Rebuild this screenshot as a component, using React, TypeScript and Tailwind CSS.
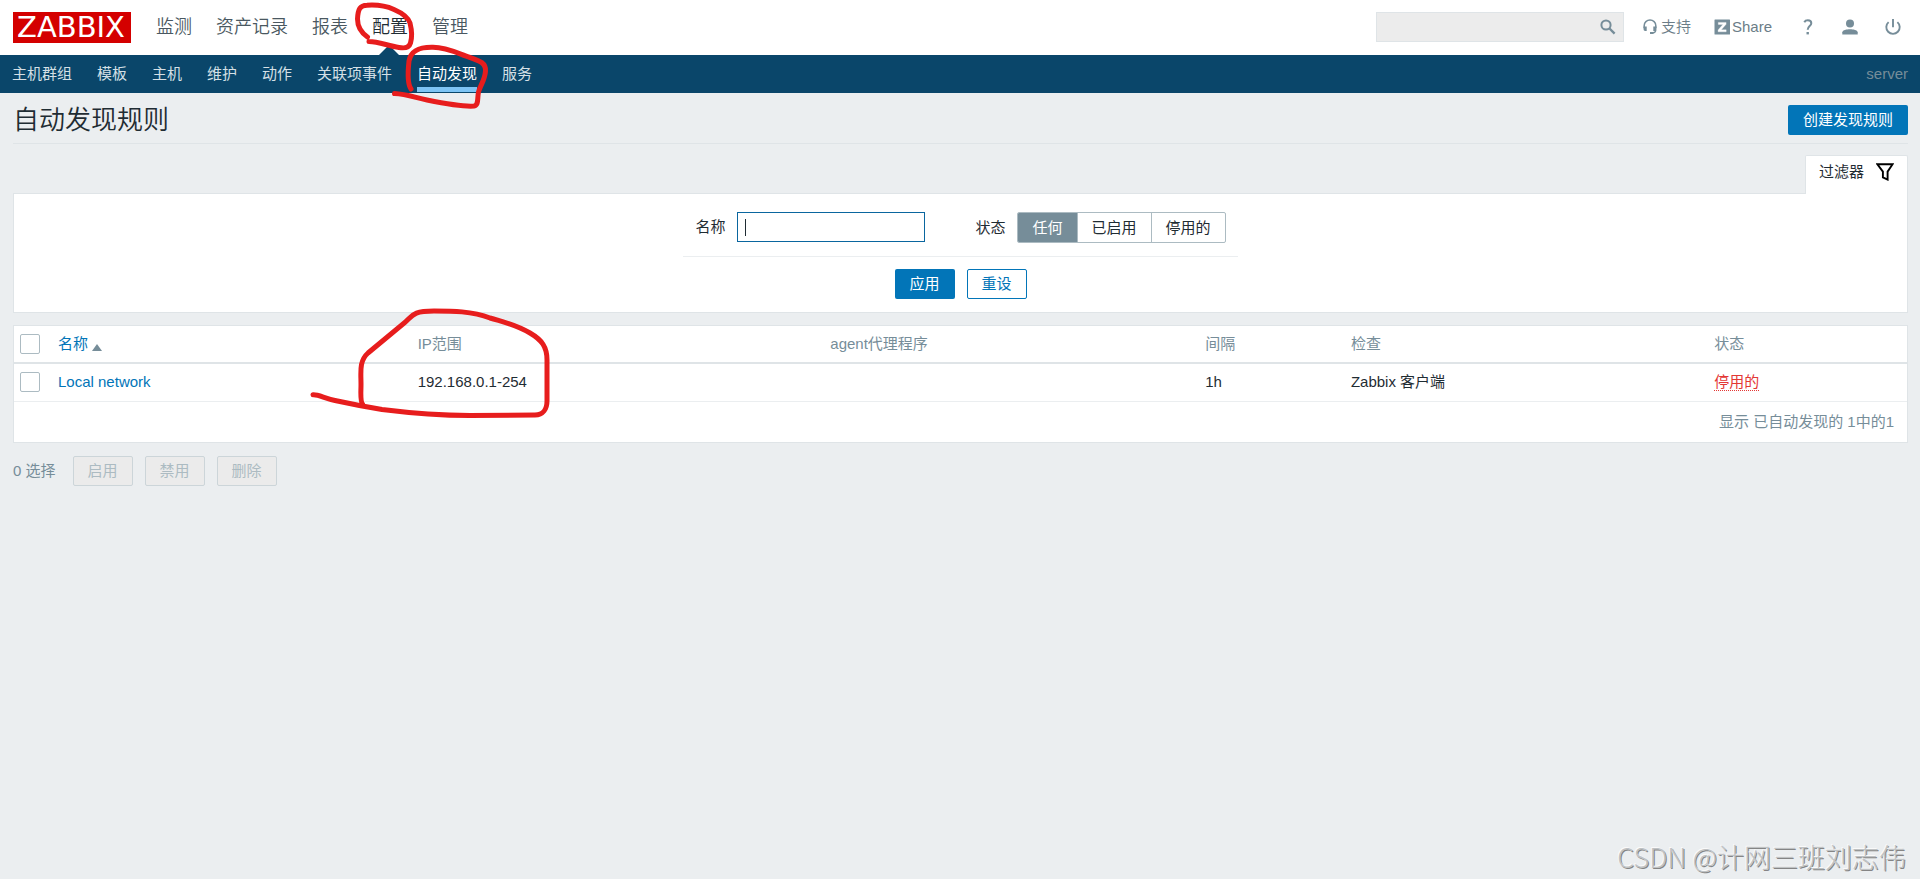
import { useState } from "react";

const mainMenu = ["监测", "资产记录", "报表", "配置", "管理"];
const subMenu = ["主机群组", "模板", "主机", "维护", "动作", "关联项事件", "自动发现", "服务"];
const statuses = ["任何", "已启用", "停用的"];
const bulkActions = ["启用", "禁用", "删除"];

function SearchIcon() {
  return (
    <svg viewBox="0 0 16 16" className="size-4" fill="none" stroke="#768d99">
      <circle cx="6" cy="6" r="4.6" strokeWidth="2" />
      <path d="M9.5 9.5 14.6 14.6" strokeWidth="2.4" />
    </svg>
  );
}

function HeadsetIcon() {
  return (
    <svg viewBox="0 0 14 16" className="h-4 w-[14px]" fill="none" stroke="#768d99">
      <path d="M1.2 9V6.6a5.8 5.6 0 0 1 11.6 0V9" strokeWidth="1.5" />
      <path d="M0.5 7.5h3.2v4.6H2.2Q.5 12.1.5 10zM13.5 7.5h-3.2v4.6h1.5q1.7 0 1.7-2.1z" fill="#768d99" stroke="none" />
      <path d="M12.8 10.8c0 2.4-1.2 3.1-3 3.2" strokeWidth="1.3" />
      <path d="M7 13h3.4v2H7z" fill="#768d99" stroke="none" />
    </svg>
  );
}

function ShareIcon() {
  return (
    <svg viewBox="0 0 16 16" className="size-4">
      <rect x=".5" y=".5" width="15.5" height="15" rx=".5" fill="#768d99" />
      <path d="M4.3 3.4h7.8v1.9l-4.8 5.5h4.9v2H4.1v-1.9l4.8-5.5H4.300z" fill="#fff" stroke="#fff" strokeWidth=".3" />
    </svg>
  );
}

function HelpIcon() {
  return (
    <svg viewBox="0 0 10 16" className="h-4 w-[10px]" fill="none" stroke="#768d99">
      <path d="M1.3 3.2C2 1.9 3.3 1.3 4.8 1.3c2 0 3.5 1 3.5 2.9 0 2.9-3.6 3-3.6 6.6" strokeWidth="2" />
      <rect x="3.5" y="13" width="2.4" height="2.4" fill="#768d99" stroke="none" />
    </svg>
  );
}

function UserIcon() {
  return (
    <svg viewBox="0 0 16 16" className="size-4" fill="#768d99">
      <circle cx="8" cy="4.4" r="4" />
      <path d="M.3 15.4v-2.2C.8 11 4.5 10.3 8 10.3s7.2.7 7.7 2.9v2.2z" />
    </svg>
  );
}

function PowerIcon() {
  return (
    <svg viewBox="0 0 16 16" className="size-4" fill="none" stroke="#768d99" strokeWidth="1.9">
      <path d="M8 0v8.3M3.6 3.1a6.7 6.7 0 1 0 8.8 0" />
    </svg>
  );
}

function FunnelIcon() {
  return (
    <svg viewBox="0 0 18 18" className="size-[18px]" fill="none" stroke="#000" strokeWidth="1.9">
      <path d="M1.4 1.2h15.2l-5 7.4v8L6.900 14.4V8.6z" />
    </svg>
  );
}

function Annotations() {
  return (
    <svg
      viewBox="0 0 600 440"
      className="pointer-events-none absolute top-0 left-0 h-[440px] w-[600px]"
      fill="none"
      stroke="#e71d1d"
      strokeWidth="5"
      strokeLinecap="round"
      strokeLinejoin="round"
      aria-hidden="true"
    >
      <path d="M367.5 37C359 31 357.5 24 357.5 19C358 9 360 5.5 367 5.3C378 4.5 386 6 394 9.5C402 13 408 17 410 23C411.5 29 412 38 410.5 43C409 48 405 48.5 399 47.5C388 46 379 41.5 369 41.5" />
      <path d="M411 89C407.5 84 408 70 409 61C411 50 420 47 433 47.3C448 47.5 459 54 470 57.5C480 61 486 63 485.5 71C485 80 480 86 478.5 92C477 99 479 105 474 106C463 107 442 103 427 100C415 97.5 406 94 394.5 93.5" />
      <path d="M313 394.8C318 394.3 324 398 335 400.5C351 404 367 407 382 409.5C418 414 440 415.5 470 415.5L535 415C543 415 547 409 547 401L547 360C547 347 542 340 530 333C515 324 503 322 490 318C472 311 452 311 434 311C411 311 413 316 403 324L368 353C359 361 361 372 361 384C361 393 360 401 362.5 404" />
    </svg>
  );
}

const checkbox =
  "block size-5 appearance-none rounded-[2px] border border-[#acbbc2] bg-white checked:bg-[#0275b8]";

export default function App() {
  const [status, setStatus] = useState("任何");
  return (
    <div className="relative min-h-screen bg-[#ebeef0] font-['Liberation_Sans','Noto_Sans_CJK_SC',sans-serif] text-[15px] leading-5 text-[#1f2c33]">
      <header>
        <div className="flex h-[55px] items-center justify-between bg-white pr-3 pl-[13px]">
          <div className="flex items-center">
            <a
              href="#home"
              className="flex h-[31px] w-[118px] items-center justify-center bg-[#d40000] pr-[2px] font-['DejaVu_Sans',sans-serif] text-[29px] leading-none text-white"
            >
              ZABBIX
            </a>
            <nav className="ml-[25px] flex gap-6 text-[18px] font-[350] text-[#4a5861]">
              {mainMenu.map((item) => (
                <a
                  key={item}
                  href="#menu"
                  className={
                    item === "配置"
                      ? "relative flex h-[55px] items-center pb-px text-[#1f2c33]"
                      : "flex h-[55px] items-center pb-px"
                  }
                >
                  {item}
                  {item === "配置" && (
                    <svg viewBox="0 0 20 9" className="absolute bottom-0 left-[7px] h-[9px] w-5" fill="#0a466a">
                      <path d="M0 9 8 1Q10-.5 12 1L20 9z" />
                    </svg>
                  )}
                </a>
              ))}
            </nav>
          </div>
          <div className="flex items-center pb-px text-[#6b7d87]">
            <form className="mr-[19px] flex h-[30px] w-[248px] items-center border border-[#dfe4e7] bg-[#ececec] pr-[7px]">
              <input aria-label="搜索" className="min-w-0 flex-1 bg-transparent px-2 outline-none" />
              <button type="button" aria-label="执行搜索">
                <SearchIcon />
              </button>
            </form>
            <a href="#support" className="mr-[23px] flex items-center gap-1 font-[350]">
              <HeadsetIcon />
              支持
            </a>
            <a href="#share" className="mr-[31px] flex items-center gap-[2px]">
              <ShareIcon />
              Share
            </a>
            <a href="#help" aria-label="帮助" className="mr-[29px]">
              <HelpIcon />
            </a>
            <a href="#profile" aria-label="用户" className="mr-[27px]">
              <UserIcon />
            </a>
            <a href="#logout" aria-label="退出" className="mr-[7px]">
              <PowerIcon />
            </a>
          </div>
        </div>
        <nav className="flex h-[38px] items-stretch gap-[25px] bg-[#0a466a] px-3 text-[#d5e0e6]">
          {subMenu.map((item) => (
            <a
              key={item}
              href="#sub"
              className={
                item === "自动发现"
                  ? "mb-px flex items-center border-b-[5px] border-[#7dc4f4] pt-[6px] text-white"
                  : "flex items-center"
              }
            >
              {item}
            </a>
          ))}
          <span className="ml-auto flex items-center text-[#768d99]">server</span>
        </nav>
      </header>

      <main className="pr-3 pl-[13px]">
        <div className="flex h-[51px] items-center justify-between border-b border-[#dfe4e7] pt-1">
          <h1 className="text-[26px] leading-8 font-[350]">自动发现规则</h1>
          <button className="h-[30px] rounded-[2px] bg-[#0275b8] px-[15px] text-white">创建发现规则</button>
        </div>

        <div className="mt-[11px] flex justify-end">
          <button className="z-10 -mb-px flex h-[39px] items-center gap-3 rounded-t-[2px] border border-b-0 border-[#dfe4e7] bg-white px-[13px] pb-[7px]">
            过滤器
            <FunnelIcon />
          </button>
        </div>
        <form className="flex h-[120px] flex-col items-center border border-[#dfe4e7] bg-white">
          <div className="flex h-[63px] items-start gap-[50px] border-b border-[#ebeef0] px-3 pt-[18px]">
            <div className="flex items-center gap-3">
              <label htmlFor="filter-name">名称</label>
              <div className="relative">
                <input
                  id="filter-name"
                  className="block h-[30px] w-[188px] border border-[#0a669f] bg-white px-[7px] outline-none"
                />
                <span className="pointer-events-none absolute top-[7px] left-2 h-[17px] w-px bg-[#1f2c33]" />
              </div>
            </div>
            <div role="radiogroup" aria-labelledby="status-label" className="flex items-center gap-3">
              <span id="status-label">状态</span>
              <div className="flex h-[31px] overflow-hidden rounded-[2px] border border-[#acbbc2]">
                {statuses.map((item) => (
                  <label
                    key={item}
                    className="flex items-center border-l border-[#acbbc2] px-[14px] first:border-l-0 has-checked:bg-[#768d99] has-checked:text-white"
                  >
                    <input
                      type="radio"
                      name="status"
                      className="sr-only"
                      checked={status === item}
                      onChange={() => setStatus(item)}
                    />
                    {item}
                  </label>
                ))}
              </div>
            </div>
          </div>
          <div className="flex gap-3 pt-3">
            <button type="button" className="h-[30px] w-[60px] rounded-[2px] bg-[#0275b8] text-white">
              应用
            </button>
            <button type="reset" className="h-[30px] w-[60px] rounded-[2px] border border-[#0275b8] bg-white text-[#0275b8]">
              重设
            </button>
          </div>
        </form>

        <div className="mt-3 border border-[#dfe4e7] bg-white">
          <table className="w-full table-fixed border-collapse text-left">
            <thead>
              <tr className="h-[37px] border-b-2 border-[#dfe4e7] text-[#768d99]">
                <th className="w-[38px] px-[6px]">
                  <input type="checkbox" aria-label="全选" className={checkbox} />
                </th>
                <th className="w-[19%] px-[6px] font-normal">
                  <a href="#sort" className="flex items-center gap-1 text-[#0275b8]">
                    名称
                    <svg viewBox="0 0 10 7" className="mt-[6px] h-[7px] w-[10px]" fill="#768d99">
                      <path d="M5 0l5 7H0z" />
                    </svg>
                  </a>
                </th>
                <th className="w-[21.8%] px-[6px] font-normal">IP范围</th>
                <th className="w-[19.8%] px-[6px] font-normal">agent代理程序</th>
                <th className="w-[7.7%] px-[6px] font-normal">间隔</th>
                <th className="w-[19.2%] px-[6px] font-normal">检查</th>
                <th className="px-[6px] font-normal">状态</th>
              </tr>
            </thead>
            <tbody>
              <tr className="h-[38px] border-b border-[#ebeef0]">
                <td className="px-[6px]">
                  <input type="checkbox" aria-label="Local network" className={checkbox} />
                </td>
                <td className="px-[6px]">
                  <a href="#rule" className="text-[#0275b8]">Local network</a>
                </td>
                <td className="px-[6px]">192.168.0.1-254</td>
                <td className="px-[6px]" />
                <td className="px-[6px]">1h</td>
                <td className="px-[6px]">Zabbix 客户端</td>
                <td className="px-[6px]">
                  <a href="#status" className="inline-block border-b border-dotted border-[#e33734] leading-[17px] text-[#e33734]">
                    停用的
                  </a>
                </td>
              </tr>
            </tbody>
          </table>
          <div className="flex h-10 items-center justify-end pr-[13px] text-[#768d99]">显示 已自动发现的 1中的1</div>
        </div>

        <div className="mt-[13px] flex items-center gap-3 text-[#768d99]">
          <span className="mr-[5px]">0 选择</span>
          {bulkActions.map((item) => (
            <button
              key={item}
              disabled
              className="h-[30px] w-[60px] rounded-[2px] border border-[#ccd5d9] bg-[#ebebeb] text-[#acbbc2]"
            >
              {item}
            </button>
          ))}
        </div>
      </main>

      <div className="absolute right-[14px] bottom-1 font-['Noto_Sans_CJK_SC',sans-serif] text-[27px] leading-9 font-light text-[#bfc2c4] [text-shadow:-1px_-1px_0_#fafafa,1px_1px_0_#858585]">
        CSDN @计网三班刘志伟
      </div>
      <Annotations />
    </div>
  );
}
